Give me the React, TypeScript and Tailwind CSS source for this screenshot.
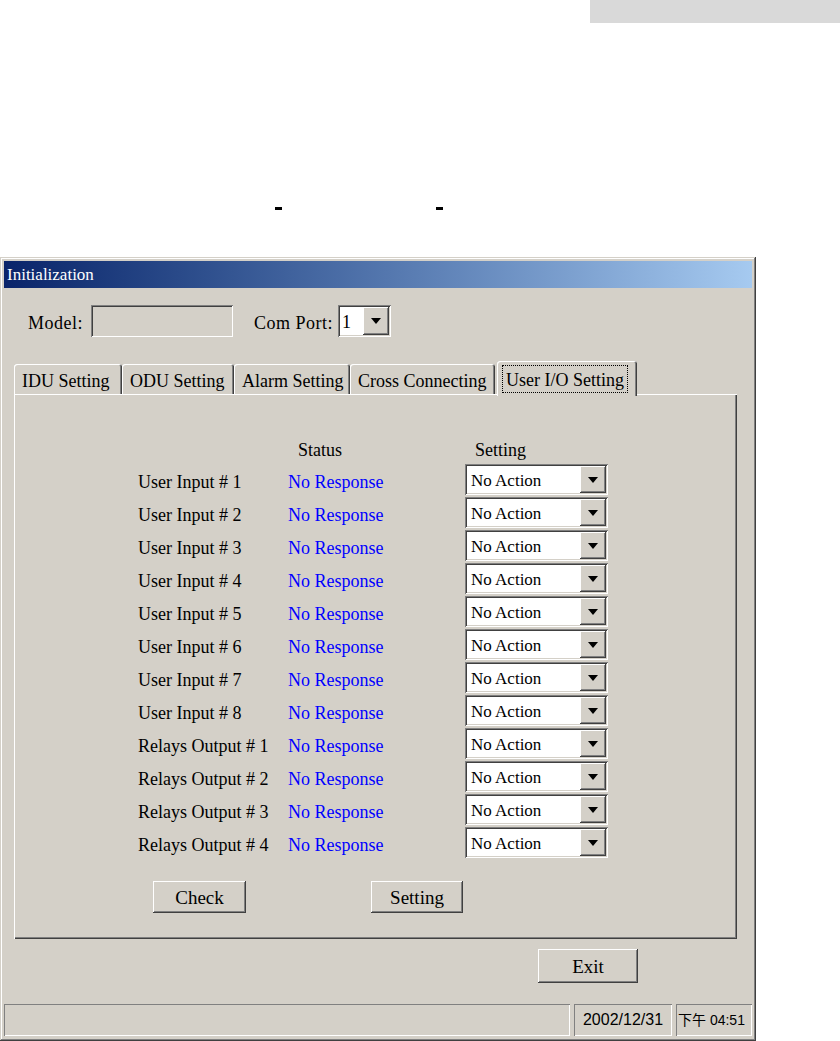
import React from 'react';

const serif = "font-['Liberation_Serif','Noto_Sans_CJK_TC',serif]";
const sans = "font-['Liberation_Sans','Noto_Sans_CJK_TC',sans-serif]";

const raised =
  'bg-[#d4d0c8] shadow-[inset_-1px_-1px_#404040,inset_1px_1px_#ffffff,inset_-2px_-2px_#808080,inset_2px_2px_#d4d0c8]';
const sunken =
  'shadow-[inset_1px_1px_#808080,inset_-1px_-1px_#ffffff,inset_2px_2px_#404040,inset_-2px_-2px_#d4d0c8]';
const thinSunken = 'shadow-[inset_1px_1px_#808080,inset_-1px_-1px_#ffffff]';

const tabs = [
  { label: 'IDU Setting', w: 'w-[108px]' },
  { label: 'ODU Setting', w: 'w-[112px]' },
  { label: 'Alarm Setting', w: 'w-[116px]' },
  { label: 'Cross Connecting', w: 'w-[145px]' },
];

const rows = [
  'User Input # 1',
  'User Input # 2',
  'User Input # 3',
  'User Input # 4',
  'User Input # 5',
  'User Input # 6',
  'User Input # 7',
  'User Input # 8',
  'Relays Output # 1',
  'Relays Output # 2',
  'Relays Output # 3',
  'Relays Output # 4',
];

function DropButton() {
  return (
    <div className={`flex h-full w-[26px] shrink-0 items-center justify-center ${raised}`}>
      <svg width="10" height="6" viewBox="0 0 10 6">
        <path d="M0 0h10L5 6z" fill="#000" />
      </svg>
    </div>
  );
}

function Combo({ value }: { value: string }) {
  return (
    <div className={`flex h-[31px] w-[143px] bg-white p-[2px] ${sunken}`}>
      <div className="flex flex-1 items-center pt-[2px] pl-[4px] text-[17px] leading-none text-black">{value}</div>
      <DropButton />
    </div>
  );
}

function Button({ label, w, h }: { label: string; w: string; h: string }) {
  return (
    <div className={`flex items-center justify-center pt-[1px] text-[19px] leading-none text-black ${w} ${h} ${raised}`}>
      {label}
    </div>
  );
}

export default function App() {
  return (
    <div className={`h-[1041px] w-[840px] overflow-hidden bg-white ${serif}`}>
      <div className="flex h-[23px] justify-end">
        <div className="w-[250px] bg-[#d9d9d9]" />
      </div>

      <div className="mt-[184px] flex h-[3px] pl-[275px]">
        <div className="w-[7px] bg-black" />
        <div className="ml-[154px] w-[7px] bg-black" />
      </div>

      <div className="mt-[47px] h-[784px] w-[756px] bg-[#d4d0c8] p-[4px] shadow-[inset_-1px_-1px_#404040,inset_1px_1px_#d4d0c8,inset_-2px_-2px_#808080,inset_2px_2px_#ffffff]">
        <div className="flex h-[27px] items-center bg-gradient-to-r from-[#0a246a] to-[#a6caf0] pl-[3px] text-[17px] text-white">
          Initialization
        </div>

        <div className="mt-[17px] flex h-[32px] items-center pl-[24px] text-[18px] leading-none text-black">
          <span className="w-[57px] pt-[3px] tracking-[0.5px]">Model:</span>
          <div className={`ml-[6px] h-full w-[142px] bg-[#d4d0c8] ${sunken}`} />
          <span className="ml-[21px] w-[79px] pt-[3px] tracking-[0.5px]">Com Port:</span>
          <div className={`ml-[5px] flex h-full w-[53px] bg-white p-[2px] ${sunken}`}>
            <div className="flex flex-1 items-center pt-[2px] pl-[2px]">1</div>
            <DropButton />
          </div>
        </div>

        <div className="mt-[24px] ml-[10px] flex h-[33px] items-end">
          {tabs.map((t) => (
            <div
              key={t.label}
              className={`flex h-[30px] items-center rounded-t-[3px] pt-[4px] pl-[8px] text-[18px] leading-none text-black shadow-[inset_1px_1px_#ffffff,inset_-1px_0_#404040,inset_-2px_0_#808080] ${t.w}`}
            >
              {t.label}
            </div>
          ))}
          <div className="relative z-10 -mb-[2px] ml-[2px] flex h-[35px] w-[140px] items-start rounded-t-[3px] bg-[#d4d0c8] pt-[4px] pl-[5px] text-[18px] text-black shadow-[inset_1px_1px_#ffffff,inset_-1px_0_#404040,inset_-2px_0_#808080]">
            <span className="border border-dotted border-black px-[3px] pt-[2px] leading-[24px]">User I/O Setting</span>
          </div>
        </div>

        <div className="ml-[10px] h-[545px] w-[723px] pt-[44px] shadow-[inset_1px_1px_#ffffff,inset_-1px_-1px_#404040,inset_-2px_-2px_#808080]">
          <div className="ml-[124px] grid grid-cols-[150px_177px_143px] gap-y-[2px] text-[18px] leading-none">
            <div className="h-[24px]" />
            <div className="flex h-[24px] items-center pl-[10px] text-black">Status</div>
            <div className="flex h-[24px] items-center pl-[10px] text-black">Setting</div>
            {rows.map((r) => (
              <React.Fragment key={r}>
                <div className="flex h-[31px] items-center whitespace-nowrap pt-[5px] text-black">{r}</div>
                <div className="flex h-[31px] items-center whitespace-nowrap pt-[5px] text-[#0000ff]">No Response</div>
                <Combo value="No Action" />
              </React.Fragment>
            ))}
          </div>
          <div className="mt-[23px] ml-[139px] flex">
            <Button label="Check" w="w-[93px]" h="h-[32px]" />
            <div className="ml-[125px]">
              <Button label="Setting" w="w-[92px]" h="h-[32px]" />
            </div>
          </div>
        </div>

        <div className="mt-[10px] ml-[534px]">
          <Button label="Exit" w="w-[100px]" h="h-[34px]" />
        </div>

        <div className={`mt-[21px] flex h-[32px] gap-[4px] text-[16px] text-black ${sans}`}>
          <div className={`w-[566px] ${thinSunken}`} />
          <div className={`flex w-[98px] items-center justify-center ${thinSunken}`}>2002/12/31</div>
          <div className={`flex w-[76px] items-center overflow-hidden whitespace-nowrap pl-[2px] text-[14px] ${thinSunken}`}>
            下午 04:51
          </div>
        </div>
      </div>
    </div>
  );
}
